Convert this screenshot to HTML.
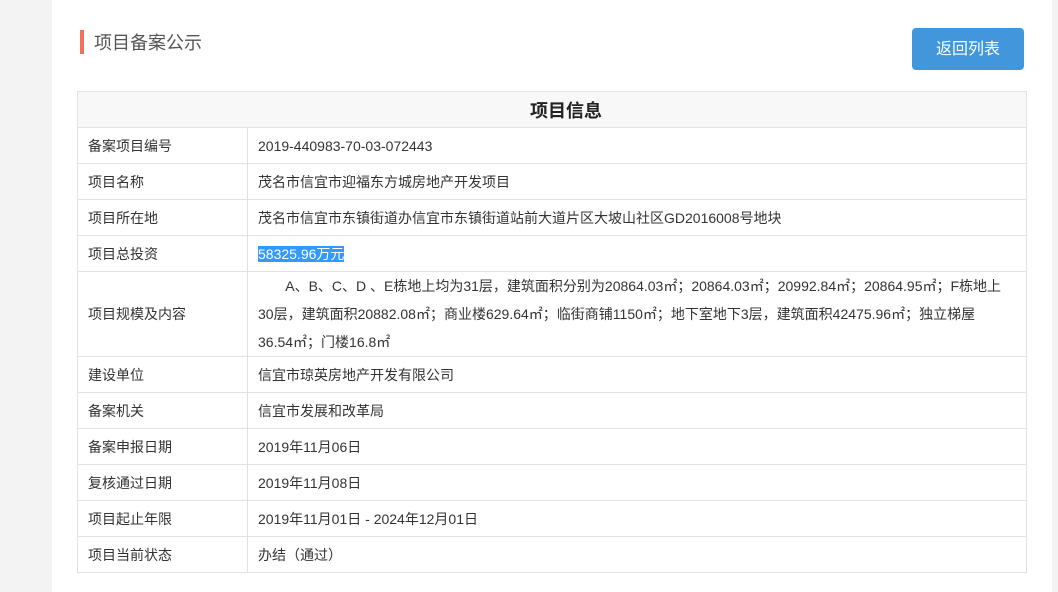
<!DOCTYPE html>
<html><head><meta charset="utf-8"><style>
html,body{margin:0;padding:0;width:1058px;height:592px;overflow:hidden;background:#f3f3f3;font-family:"Liberation Sans","Noto Sans CJK SC",sans-serif;}
.panel{position:absolute;left:52px;top:0;width:1000px;height:592px;background:#fff;}
.bar{position:absolute;left:80px;top:30px;width:4px;height:24px;background:#f0725a;}
.title{position:absolute;left:94px;top:31px;font-size:18px;color:#555;line-height:24px;}
.btn{position:absolute;left:912px;top:28px;width:112px;height:42px;background:#4296dc;border-radius:4px;color:#fff;font-size:16px;line-height:44px;text-align:center;}
table{position:absolute;left:77px;top:91px;width:950px;border-collapse:collapse;font-size:14px;color:#333;}
td,th{border:1px solid #e2e2e2;padding:0 10px;height:35px;line-height:28px;text-align:left;}
th{background:#f8f8f8;text-align:center;font-size:18px;font-weight:bold;color:#222;padding-left:38px;padding-top:2px;height:33px;}
td.l{width:149px;}
.sel{background:#3399ff;color:#fff;}
</style></head><body>
<div class="panel"></div>
<div class="bar"></div>
<div class="title">项目备案公示</div>
<div class="btn">返回列表</div>
<table>
<tr><th colspan="2">项目信息</th></tr>
<tr><td class="l">备案项目编号</td><td>2019-440983-70-03-072443</td></tr>
<tr><td class="l">项目名称</td><td>茂名市信宜市迎福东方城房地产开发项目</td></tr>
<tr><td class="l">项目所在地</td><td>茂名市信宜市东镇街道办信宜市东镇街道站前大道片区大坡山社区GD2016008号地块</td></tr>
<tr><td class="l">项目总投资</td><td><span class="sel">58325.96万元</span></td></tr>
<tr><td class="l" style="height:84px">项目规模及内容</td><td>&nbsp;&nbsp;&nbsp;&nbsp;&nbsp;&nbsp;&nbsp;A、B、C、D 、E栋地上均为31层，建筑面积分别为20864.03㎡；20864.03㎡；20992.84㎡；20864.95㎡；F栋地上<br>30层，建筑面积20882.08㎡；商业楼629.64㎡；临街商铺1150㎡；地下室地下3层，建筑面积42475.96㎡；独立梯屋<br>36.54㎡；门楼16.8㎡</td></tr>
<tr><td class="l">建设单位</td><td>信宜市琼英房地产开发有限公司</td></tr>
<tr><td class="l">备案机关</td><td>信宜市发展和改革局</td></tr>
<tr><td class="l">备案申报日期</td><td>2019年11月06日</td></tr>
<tr><td class="l">复核通过日期</td><td>2019年11月08日</td></tr>
<tr><td class="l">项目起止年限</td><td>2019年11月01日 - 2024年12月01日</td></tr>
<tr><td class="l">项目当前状态</td><td>办结（通过）</td></tr>
</table>
</body></html>
